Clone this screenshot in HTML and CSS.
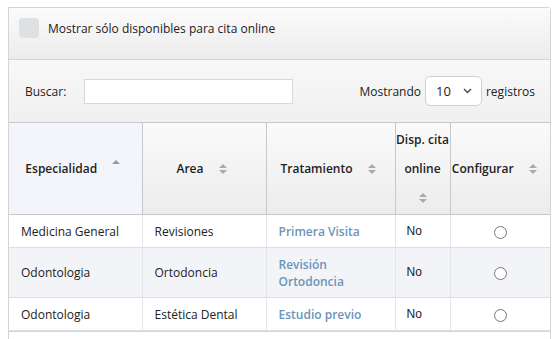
FILE: index.html
```html
<!DOCTYPE html>
<html lang="es">
<head>
    <meta charset="UTF-8">
    <title>Tratamientos</title>
    <link rel="stylesheet" href="styles.css">
</head>
<body>
<div class="panel">
    <div class="panel-head">
        <label class="check-label"><span class="check"></span>Mostrar sólo disponibles para cita online</label>
    </div>
    <div class="toolbar">
        <div class="search">
            <span>Buscar:</span>
            <input type="text" class="search-input">
        </div>
        <div class="length">
            <span>Mostrando</span>
            <div class="select"><span>10</span>
                <svg width="9" height="6" viewBox="0 0 9 6"><path d="M1 1l3.5 3.5L8 1" fill="none" stroke="#444" stroke-width="1.4"/></svg>
            </div>
            <span>registros</span>
        </div>
    </div>
    <table class="grid">
        <colgroup>
            <col style="width:133px">
            <col style="width:124px">
            <col style="width:129px">
            <col style="width:55px">
            <col>
        </colgroup>
        <thead>
        <tr>
            <th class="sorted">Especialidad<span class="sort asc"></span></th>
            <th>Area<span class="sort"></span></th>
            <th>Tratamiento<span class="sort"></span></th>
            <th class="narrow">Disp.&nbsp;cita online<br><span class="sort solo"></span></th>
            <th class="last">Configurar<span class="sort"></span></th>
        </tr>
        </thead>
        <tbody>
        <tr>
            <td>Medicina General</td>
            <td>Revisiones</td>
            <td><a href="#">Primera Visita</a></td>
            <td class="no">No</td>
            <td class="radio"><input type="radio"></td>
        </tr>
        <tr class="odd">
            <td>Odontologia</td>
            <td>Ortodoncia</td>
            <td><a href="#">Revisión Ortodoncia</a></td>
            <td class="no">No</td>
            <td class="radio"><input type="radio"></td>
        </tr>
        <tr>
            <td>Odontologia</td>
            <td>Estética Dental</td>
            <td><a href="#">Estudio previo</a></td>
            <td class="no">No</td>
            <td class="radio"><input type="radio"></td>
        </tr>
        </tbody>
    </table>
    <div class="panel-foot"></div>
</div>
</body>
</html>
```

FILE: styles.css
```css
* {
    margin: 0;
    padding: 0;
    box-sizing: border-box;
}
body {
    font-family: "Open Sans", Arial, sans-serif;
    font-size: 12px;
    color: #222;
    background: #fff;
}
.panel {
    margin: 7px 8px 0 8px;
    width: 543px;
    border: 1px solid #d4d4d4;
    border-top-right-radius: 4px;
    border-bottom: none;
}
/* cabecera con el filtro */
.panel-head {
    height: 52px;
    background: linear-gradient(#fbfbfb, #ececec);
    border-bottom: 1px solid #d6d6d6;
    padding: 10px 0 0 10px;
}
.check-label {
    display: flex;
    align-items: center;
    gap: 9px;
    font-size: 12px;
    color: #222;
}
.check {
    width: 20px;
    height: 20px;
    border-radius: 4px;
    background: #dde1e3;
}
.toolbar {
    height: 63px;
    background: linear-gradient(#f8f8f8, #f0f0f0);
    border-bottom: 1px solid #c8c8cc;
    display: flex;
    align-items: center;
    justify-content: space-between;
    padding: 0 15px 0 16px;
}
.search {
    display: flex;
    align-items: center;
    gap: 18px;
}
.search-input {
    width: 209px;
    height: 25px;
    border: 1px solid #d8d8d8;
    background: #fff;
}
.length {
    display: flex;
    align-items: center;
    gap: 4px;
}
.select {
    width: 57px;
    height: 30px;
    border: 1px solid #cfcfcf;
    border-radius: 5px;
    background: #fff;
    display: flex;
    align-items: center;
    justify-content: space-between;
    padding: 0 9px 0 10px;
    font-size: 13px;
}
.grid {
    width: 100%;
    border-collapse: collapse;
    table-layout: fixed;
}
.grid th {
    height: 91px;
    font-weight: 600;
    line-height: 29px;
    text-align: center;
    background: linear-gradient(#fafafa, #ececec);
    border-left: 1px solid #c8c8cc;
    border-bottom: 1px solid #c8c8cc;
    padding: 0 5px 0 0;
}
.grid th:first-child {
    border-left: none;
}
.grid th.sorted {
    background: #f4f5fa;
}
.grid th.narrow {
    padding: 0;
}
.grid th.last {
    padding-right: 12px;
}
.sort {
    display: inline-block;
    width: 8px;
    height: 10px;
    margin-left: 15px;
    vertical-align: -1px;
    position: relative;
}
.sort::before,
.sort::after {
    content: "";
    position: absolute;
    left: 0;
    border-left: 4px solid transparent;
    border-right: 4px solid transparent;
}
.sort::before {
    top: 0;
    border-bottom: 4px solid #aaa;
}
.sort::after {
    bottom: 0;
    border-top: 4px solid #aaa;
}
.sort.asc {
    vertical-align: 3px;
}
.sort.asc::before {
    border-bottom-color: #999;
}
.sort.asc::after {
    display: none;
}
.sort.solo {
    margin-left: 0;
}
.grid td {
    padding: 8px 12px 7px;
    line-height: 17px;
    border-left: 1px solid #e6e6e6;
    border-bottom: 1px solid #dedede;
    vertical-align: middle;
}
.grid td:first-child {
    border-left: none;
}
.grid tr.odd td {
    background: #f3f4f8;
}
.grid a {
    color: #6a95bb;
    font-weight: 600;
    text-decoration: none;
}
.grid td.no {
    font-family: "Liberation Sans", Arial, sans-serif;
    padding-left: 11px;
}
.grid td.radio {
    text-align: center;
    padding: 8px 0 7px;
}
.radio input {
    width: 13px;
    height: 13px;
    margin: 0;
    vertical-align: middle;
}
.panel-foot {
    height: 12px;
    border-top: 1px solid #d6d6d6;
}
```
